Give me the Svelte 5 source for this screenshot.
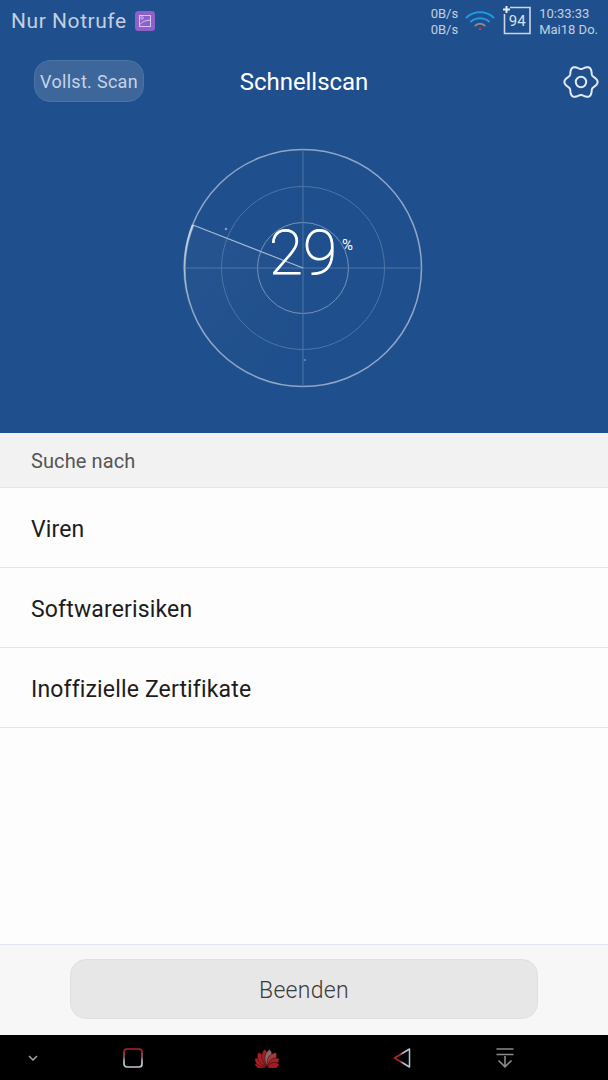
<script>
  const items = ['Viren', 'Softwarerisiken', 'Inoffizielle Zertifikate'];

  // huawei fan: angle from the vertical, petal length, fill
  const petals = [
    { a: -78, l: 12.5, w: 5, c: '#a01c22' },
    { a: -55, l: 15, w: 5.6, c: '#a81f26' },
    { a: -32, l: 17, w: 6, c: '#a81f26' },
    { a: -9, l: 18, w: 5.6, c: '#9c2429' },
    { a: 9, l: 18, w: 5.6, c: '#8b6665' },
    { a: 32, l: 17, w: 6, c: '#a23a3c' },
    { a: 55, l: 15, w: 5.6, c: '#a81f26' },
    { a: 78, l: 12.5, w: 5, c: '#a01c22' }
  ];

  // six rounded lobes around the centre of a 36px box
  const gearPath = Array.from({ length: 120 }, (_, i) => {
    const t = (i / 120) * Math.PI * 2;
    const r = 14.8 + 1.8 * Math.cos(6 * t);
    return `${i ? 'L' : 'M'}${(18 + r * Math.cos(t)).toFixed(2)} ${(18 + r * Math.sin(t)).toFixed(2)}`;
  }).join(' ') + ' Z';
</script>

<div class="page">
  <header class="top">
    <div class="status">
      <div class="carrier">
        <span>Nur Notrufe</span>
        <svg class="pic" width="20" height="20" viewBox="0 0 20 20">
          <rect width="20" height="20" rx="3.5" fill="#8d61c9" />
          <rect x="4.5" y="4.5" width="11" height="11" fill="none" stroke="#d5c4ee" stroke-width="1" />
          <circle cx="7" cy="7" r="1.3" fill="none" stroke="#d5c4ee" stroke-width="0.8" />
          <path d="M4.5 14 C7 10.5 10 9.5 15.5 9" fill="none" stroke="#d5c4ee" stroke-width="1" />
        </svg>
      </div>
      <div class="indicators">
        <div class="speed"><span>0B/s</span><span>0B/s</span></div>
        <svg class="wifi" width="30" height="24" viewBox="0 0 30 24" fill="none" stroke-linecap="round">
          <path d="M1.5 8.5 C9 1.5 21 1.5 28.5 8.5" stroke="#1e9ade" stroke-width="2" />
          <path d="M6 12.5 C11 8 19 8 24 12.5" stroke="#1e9ade" stroke-width="2" />
          <path d="M10.5 16.5 C13 14.3 17 14.3 19.5 16.5" stroke="#8d8a8a" stroke-width="2" />
          <circle cx="15" cy="20" r="1.3" fill="#b8423e" />
        </svg>
        <div class="battery">
          <svg width="28" height="29" viewBox="0 0 28 29" fill="none">
            <path d="M7 1.5 H27 V27.5 H1.5 V8" stroke="#cbd6e6" stroke-width="1.6" />
            <path d="M3.5 0 V7 M0 3.5 H7" stroke="#e6ebf3" stroke-width="2" />
          </svg>
          <span>94</span>
        </div>
        <div class="clock"><span>10:33:33</span><span>Mai18 Do.</span></div>
      </div>
    </div>

    <div class="toolbar">
      <button class="full">Vollst. Scan</button>
      <h1>Schnellscan</h1>
      <svg class="gear" width="36" height="36" viewBox="0 0 36 36" fill="none" stroke="#e3e9f2" stroke-width="2">
        <path d={gearPath} stroke-linejoin="round" />
        <circle cx="18" cy="18" r="5.2" />
      </svg>
    </div>

    <div class="radar">
      <svg width="240" height="240" viewBox="0 0 240 240" fill="none">
        <defs>
          <linearGradient id="trail" x1="0" y1="0" x2="0" y2="1">
            <stop offset="0" stop-color="#fff" stop-opacity="0.55" />
            <stop offset="1" stop-color="#fff" stop-opacity="0" />
          </linearGradient>
          <linearGradient id="sweep" x1="0" y1="0" x2="1" y2="1">
            <stop offset="0" stop-color="#fff" stop-opacity="0.03" />
            <stop offset="0.9" stop-color="#fff" stop-opacity="0" />
          </linearGradient>
        </defs>
        <path d="M120 120 L10 77 A118.5 118.5 0 0 0 120 238.5 Z" fill="url(#sweep)" />
        <circle cx="120" cy="120" r="118.5" stroke="#8ea7c8" stroke-width="1.5" />
        <circle cx="120" cy="120" r="81.5" stroke="#4d74a6" />
        <circle cx="120" cy="120" r="45.5" stroke="#7493bb" />
        <path d="M120 1.5 V238.5 M1.5 120 H238.5" stroke="#4f76a8" />
        <path d="M120 120 L10 77" stroke="#a9bdd6" stroke-width="1.1" />
        <path d="M10 77 A118.5 118.5 0 0 0 8 160" stroke="url(#trail)" stroke-width="2.5" />
        <circle cx="43" cy="81" r="1.3" fill="#7e9cc2" />
        <circle cx="122" cy="212" r="1.1" fill="#6a8bb6" />
      </svg>
      <div class="percent"><span class="value">29</span><span class="unit">%</span></div>
    </div>
  </header>

  <div class="section">Suche nach</div>
  <ul class="list">
    {#each items as item}
      <li>{item}</li>
    {/each}
  </ul>

  <div class="actions">
    <button class="stop">Beenden</button>
  </div>

  <nav class="navbar">
    <svg class="nav-down" width="10" height="6" viewBox="0 0 10 6" fill="none">
      <path d="M1 1 L5 5 L9 1" stroke="#a5a5a0" stroke-width="1.5" />
    </svg>
    <svg width="20" height="20" viewBox="0 0 20 20" fill="none">
      <defs>
        <linearGradient id="square" x1="0" y1="0" x2="0" y2="1">
          <stop offset="0.1" stop-color="#b3222c" />
          <stop offset="0.45" stop-color="#8a5a66" />
          <stop offset="0.7" stop-color="#bfc6d2" />
        </linearGradient>
        <linearGradient id="back" x1="0" y1="0" x2="1" y2="0">
          <stop offset="0.35" stop-color="#b3222c" />
          <stop offset="0.6" stop-color="#b9c4d4" />
        </linearGradient>
      </defs>
      <rect x="1" y="1" width="18" height="18" rx="3" stroke="url(#square)" stroke-width="1.7" />
    </svg>
    <svg width="26" height="20" viewBox="0 0 26 20">
      {#each petals as p}
        <path
          d="M13 19 C{13 - p.w} {19 - p.l * 0.45} {13 - p.w * 0.7} {19 - p.l * 0.8} 13 {19 - p.l} C{13 + p.w * 0.7} {19 - p.l * 0.8} {13 + p.w} {19 - p.l * 0.45} 13 19 Z"
          fill={p.c}
          stroke="#000"
          stroke-width="0.4"
          transform="rotate({p.a} 13 19)"
        />
      {/each}
    </svg>
    <svg width="18" height="20" viewBox="0 0 18 20" fill="none">
      <path d="M16.5 1 V19 L1.5 10 Z" stroke="url(#back)" stroke-width="1.5" stroke-linejoin="round" />
    </svg>
    <svg width="18" height="20" viewBox="0 0 18 20" fill="none" stroke="#8c8c88" stroke-width="1.6">
      <path d="M0.5 1 H17.5 M0.5 6.5 H17.5 M9 8 V18.5 M2.5 12.5 L9 18.8 L15.5 12.5" />
    </svg>
  </nav>
</div>

<style>
  :global(body) {
    margin: 0;
    background: #fdfdfd;
  }

  .page {
    width: 608px;
    height: 1080px;
    display: flex;
    flex-direction: column;
    font-family: 'Roboto', sans-serif;
    overflow: hidden;
  }

  .top {
    height: 433px;
    flex: none;
    background: #1f4f8c;
    box-sizing: border-box;
  }

  .status {
    height: 42px;
    display: flex;
    justify-content: space-between;
    padding: 0 10px 0 11px;
    color: #c2cfe1;
  }

  .carrier {
    display: flex;
    align-items: center;
    gap: 8px;
    height: 42px;
    font-size: 21px;
    letter-spacing: 0.55px;
  }

  .pic {
    margin-top: -1px;
  }

  .indicators {
    display: flex;
    align-items: flex-start;
    padding-top: 6px;
    font-size: 13px;
    line-height: 16px;
  }

  .speed,
  .clock {
    display: flex;
    flex-direction: column;
  }

  .wifi {
    margin: 3px 0 0 7px;
  }

  .battery {
    position: relative;
    width: 28px;
    height: 29px;
    margin-left: 8px;
    margin-right: 8px;
  }

  .battery span {
    position: absolute;
    left: 0;
    right: 0;
    top: 5px;
    text-align: center;
    font-size: 15px;
    line-height: 20px;
    color: #d8e0ec;
  }

  .toolbar {
    height: 78px;
    display: flex;
    align-items: center;
    justify-content: space-between;
    padding: 0 9px 0 34px;
    position: relative;
  }

  .full {
    width: 110px;
    height: 42px;
    padding: 0;
    border: 1px solid #4b73a5;
    border-radius: 16px;
    background: #3d669b;
    color: #c6d3e4;
    font: 18px 'Roboto', sans-serif;
    letter-spacing: 0.3px;
  }

  h1 {
    position: absolute;
    left: 0;
    right: 0;
    margin: 2px 0 0;
    text-align: center;
    font-size: 24px;
    font-weight: 400;
    letter-spacing: -0.05px;
    color: #fff;
    pointer-events: none;
  }

  .gear {
    margin-top: 1px;
  }

  .radar {
    position: relative;
    width: 240px;
    height: 240px;
    margin: 28px 0 0 183px;
  }

  .radar svg {
    display: block;
  }

  .percent {
    position: absolute;
    left: 86px;
    top: 70px;
    display: flex;
    align-items: flex-start;
    color: #fff;
  }

  .value {
    font-size: 62px;
    line-height: 70px;
    font-weight: 100;
    -webkit-text-stroke: 1px #fff;
  }

  .unit {
    font-size: 15px;
    font-weight: 400;
    margin: 19px 0 0 5px;
    line-height: 16px;
  }

  .section {
    height: 55px;
    flex: none;
    box-sizing: border-box;
    background: #f2f2f2;
    border-bottom: 1px solid #e6e6e6;
    padding: 0 0 0 31px;
    font-size: 20px;
    line-height: 56px;
    color: #555;
    letter-spacing: 0.1px;
  }

  .list {
    flex: 1;
    list-style: none;
    margin: 0;
    padding: 0;
  }

  .list li {
    height: 80px;
    box-sizing: border-box;
    border-bottom: 1px solid #e4e4e4;
    padding-left: 31px;
    font-size: 23px;
    line-height: 84px;
    color: #1c1c1c;
    letter-spacing: 0.15px;
  }

  .actions {
    height: 91px;
    flex: none;
    box-sizing: border-box;
    background: #f7f7f7;
    border-top: 1px solid #dfe4ee;
    padding: 14px 70px;
  }

  .stop {
    display: block;
    width: 100%;
    height: 60px;
    padding: 3px 0 0;
    border: 1px solid #e0e0e0;
    border-radius: 16px;
    background: #e7e7e7;
    color: #3a3a3a;
    font: 300 23px 'Roboto', sans-serif;
    letter-spacing: 0.3px;
  }

  .navbar {
    height: 45px;
    flex: none;
    background: #000;
    display: grid;
    grid-template-columns: 66px 134px 134px 136px 70px;
    justify-items: center;
    align-items: center;
  }

  .nav-down {
    margin-top: 1px;
  }
</style>
